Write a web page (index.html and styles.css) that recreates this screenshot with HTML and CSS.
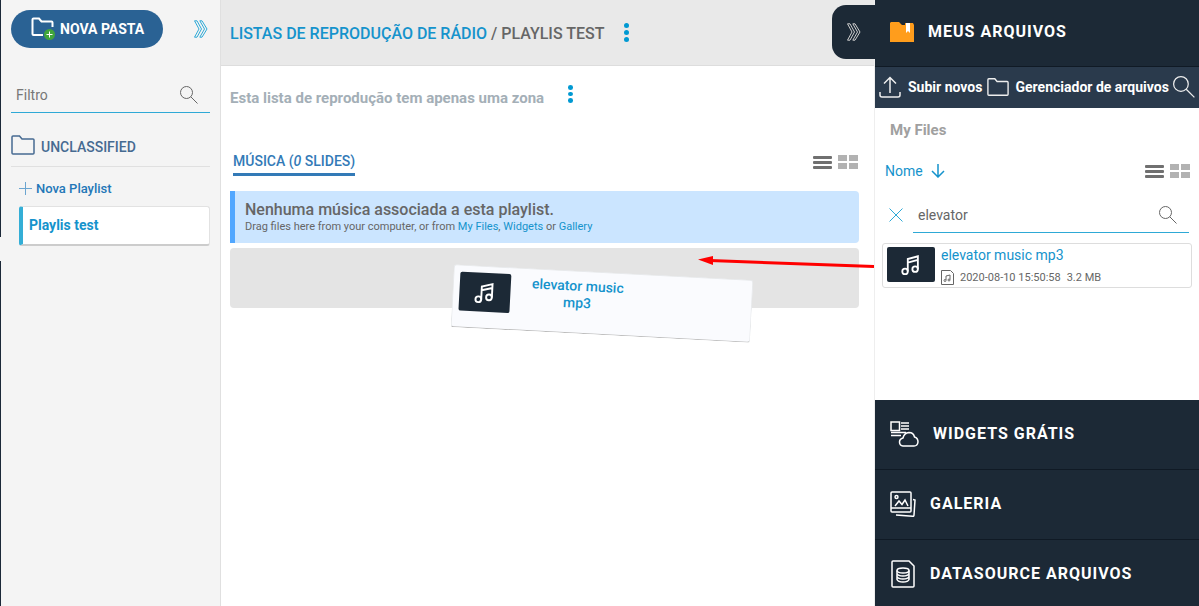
FILE: index.html
```html
<!DOCTYPE html>
<html lang="pt">
<head>
	<meta charset="utf-8">
	<title>Playlis test</title>
	<meta name="viewport" content="width=device-width, initial-scale=1">
	<link rel="stylesheet" href="styles.css">
</head>
<body>
	<svg class="defs" aria-hidden="true">
		<symbol id="search" viewBox="0 0 18 18">
			<circle cx="6.5" cy="6.5" r="6"/>
			<path d="M10.8 10.8L17.5 17.5"/>
		</symbol>
		<symbol id="folder" viewBox="0 0 24 20">
			<path d="M1 18V2Q1 1 2 1H8.5L11 4H22Q23 4 23 5V18Q23 19 22 19H2Q1 19 1 18Z"/>
		</symbol>
		<symbol id="chevrons" viewBox="0 0 14 18">
			<path d="M.5.8H3L7.5 9 3 17.2H.5L5 9ZM5.8.8H8L13 9 8 17.2H5.8L10.5 9Z"/>
		</symbol>
		<symbol id="note" viewBox="0 0 24 24">
			<circle cx="5.5" cy="19" r="3"/>
			<circle cx="16.5" cy="16.5" r="3"/>
			<path d="M8.5 19V5.5L19.5 2.5V16.5M8.5 9.5L19.5 6.5"/>
		</symbol>
	</svg>
	<div class="app">
		<div class="rail"><span></span></div>
		<aside class="sidebar">
			<div class="sidebar-top">
				<button class="new-folder" type="button">
					<svg width="25" height="24" viewBox="0 0 25 24">
						<path class="line" d="M12 18H2.5Q1.5 18 1.5 17V2.5Q1.5 1.5 2.5 1.5H8L10.500 4.500H20.500Q21.500 4.500 21.500 5.500V10"/>
						<circle cx="18.500" cy="17.500" r="5.500" fill="#41a63b"/>
						<path d="M18.500 14.500V20.500M15.500 17.500H21.500" stroke="#fff" stroke-width="1"/>
					</svg>
					NOVA PASTA
				</button>
				<button class="plain" type="button" aria-label="Recolher">
					<svg class="icon blue" width="14" height="18"><use href="#chevrons"/></svg>
				</button>
			</div>
			<div class="filter">
				<input type="text" placeholder="Filtro" aria-label="Filtro">
				<svg class="icon gray" width="18" height="18"><use href="#search"/></svg>
			</div>
			<a class="folder" href="#">
				<svg class="icon bold" width="24" height="20"><use href="#folder"/></svg>
				<span>UNCLASSIFIED</span>
			</a>
			<div class="playlists">
				<a class="new-playlist" href="#">
					<svg class="icon" width="13" height="13" viewBox="0 0 13 13"><path d="M6.5 0V13M0 6.5H13"/></svg>
					Nova Playlist
				</a>
				<a class="playlist" href="#">Playlis test</a>
			</div>
		</aside>
		<main class="main">
			<header class="main-header">
				<h1><a href="#">LISTAS DE REPRODUÇÃO DE RÁDIO</a> / PLAYLIS TEST</h1>
				<button class="plain dots" type="button" aria-label="Menu"><i></i><i></i><i></i></button>
				<button class="panel-toggle" type="button" aria-label="Fechar painel">
					<svg class="icon" width="14" height="18"><use href="#chevrons"/></svg>
				</button>
			</header>
			<div class="content">
				<div class="zone">
					<p>Esta lista de reprodução tem apenas uma zona</p>
					<button class="plain dots" type="button" aria-label="Menu da zona"><i></i><i></i><i></i></button>
				</div>
				<div class="tabs">
					<a class="tab" href="#">MÚSICA (<em>0</em> SLIDES)</a>
					<div class="views">
						<button class="plain view-list" type="button" aria-label="Lista"><i></i><i></i><i></i></button>
						<button class="plain view-grid" type="button" aria-label="Grade"><i></i><i></i><i></i><i></i></button>
					</div>
				</div>
				<div class="notice">
					<h2>Nenhuma música associada a esta playlist.</h2>
					<p>Drag files here from your computer, or from <a href="#">My Files</a>, <a href="#">Widgets</a> or <a href="#">Gallery</a></p>
				</div>
				<div class="drop">
					<div class="dragged">
						<div class="thumb"><svg class="icon" width="23" height="24"><use href="#note"/></svg></div>
						<span>elevator music mp3</span>
					</div>
					<svg class="arrow" width="176" height="14" viewBox="0 0 176 14">
						<path d="M12 4.500L176 10.500" stroke="#f00" stroke-width="3"/>
						<path d="M0 3.500L15 0V9Z" fill="#f00"/>
					</svg>
				</div>
			</div>
		</main>
		<aside class="panel">
			<button class="section open" type="button">
				<svg width="24" height="20" viewBox="0 0 24 20">
					<path d="M1 0H9L12 3H15V1H23L24 3V20H0V1Z" fill="#ff9d1c"/>
					<path d="M16 1H20V11L18 9 16 11Z" fill="#fff"/>
				</svg>
				MEUS ARQUIVOS
			</button>
			<div class="toolbar">
				<button class="plain" type="button">
					<svg class="icon bold" width="22" height="22" viewBox="0 0 22 22"><path d="M11 17V1.500M5 7.500L11 1.500 17 7.500M1 16V19Q1 21 3 21H19Q21 21 21 19V16"/></svg>
					Subir novos
				</button>
				<button class="plain" type="button">
					<svg class="icon bold" width="22" height="20"><use href="#folder"/></svg>
					Gerenciador de arquivos
				</button>
				<button class="plain" type="button" aria-label="Buscar">
					<svg class="icon" width="22" height="22"><use href="#search"/></svg>
				</button>
			</div>
			<div class="files">
				<h3>My Files</h3>
				<div class="sort">
					<a href="#">Nome
						<svg class="icon bold" width="14" height="14" viewBox="0 0 14 14"><path d="M7 0V13M1 7L7 13 13 7"/></svg>
					</a>
					<div class="views">
						<button class="plain view-list" type="button" aria-label="Lista"><i></i><i></i><i></i></button>
						<button class="plain view-grid" type="button" aria-label="Grade"><i></i><i></i><i></i><i></i></button>
					</div>
				</div>
				<div class="search">
					<button class="plain" type="button" aria-label="Limpar">
						<svg class="icon blue" width="14" height="14" viewBox="0 0 14 14"><path d="M.5.5L13.500 13.500M13.500.5L.5 13.500"/></svg>
					</button>
					<div class="filter">
						<input type="text" value="elevator" aria-label="Buscar arquivos">
						<svg class="icon gray" width="18" height="18"><use href="#search"/></svg>
					</div>
				</div>
				<div class="file">
					<div class="thumb"><svg class="icon" width="22" height="24"><use href="#note"/></svg></div>
					<div class="file-info">
						<a href="#">elevator music mp3</a>
						<p>
							<svg class="icon gray" width="13" height="15" viewBox="0 0 13 15">
								<path d="M.5.5H9.500L12.500 3.500V14.500H.5Z"/>
								<path d="M5 10V6L9 5V9.500"/>
								<circle cx="4" cy="10.500" r="1"/>
								<circle cx="8" cy="10" r="1"/>
							</svg>
							<span>2020-08-10 15:50:58</span>
							<span>3.2 MB</span>
						</p>
					</div>
				</div>
			</div>
			<button class="section" type="button">
				<svg class="icon bold" width="29" height="26" viewBox="0 0 29 26">
					<path d="M1 1H9.500V9.500H1ZM11 2H19M11 5H19M11 8H19M1 11.500H16M1 14.500H11"/>
					<path d="M13 25Q9.500 24.500 9.500 21 9.500 18 13 17 14 12 19 11.500 23.500 11.500 24.500 16 28 17 28 21 27.500 25 24 25Z"/>
				</svg>
				WIDGETS GRÁTIS
			</button>
			<button class="section" type="button">
				<svg class="icon bold" width="26" height="26" viewBox="0 0 26 26">
					<path d="M2 1H20Q21 1 21 2V20Q21 21 20 21H2Q1 21 1 20V2Q1 1 2 1ZM1 17H21"/>
					<path d="M5 15L9 10 12 13.500 15 9 18 15"/>
					<circle cx="6.500" cy="6" r="1.500"/>
					<path d="M23 8.500L25 9 24 24Q24 25.500 22.500 25.200L6 24"/>
				</svg>
				GALERIA
			</button>
			<button class="section" type="button">
				<svg class="icon bold" width="26" height="28" viewBox="0 0 26 28">
					<path d="M3 1H19L24 6V26Q24 27 23 27H3Q2 27 2 26V2Q2 1 3 1Z"/>
					<ellipse cx="13" cy="10.500" rx="6" ry="2.500"/>
					<path d="M7 10.500V19.500Q8 22 13 22 18 22 19 19.500V10.500M7 13.500Q8 16 13 16 18 16 19 13.500M7 16.500Q8 19 13 19 18 19 19 16.500"/>
				</svg>
				DATASOURCE ARQUIVOS
			</button>
		</aside>
	</div>
</body>
</html>
```
FILE: styles.css
```css
* {
	margin: 0;
	padding: 0;
	box-sizing: border-box;
}
body {
	font-family: Roboto, sans-serif;
	font-size: 14px;
	color: #666;
	background: #fff;
}
a {
	color: #1593cc;
	text-decoration: none;
}
button,
input {
	font: inherit;
	color: inherit;
}
button {
	cursor: pointer;
}
svg {
	flex: none;
}
.defs {
	position: absolute;
	width: 0;
	height: 0;
}
.icon {
	fill: none;
	stroke: currentColor;
	stroke-width: 1;
}
.icon.bold {
	stroke-width: 1.5;
}
.blue {
	color: #2ea9d6;
}
.gray {
	color: #666;
}
.plain {
	display: flex;
	align-items: center;
	background: none;
	border: none;
}
.app {
	display: flex;
	height: 100vh;
	overflow: hidden;
}

/* left */
.rail {
	width: 1px;
	padding-top: 237px;
	background: #1b2838;
}
.rail span {
	display: block;
	height: 24px;
	background: #f4f4f4;
}
.sidebar {
	width: 220px;
	padding: 10px;
	background: #f4f4f4;
	border-right: 1px solid #e0e0e0;
}
.sidebar-top {
	display: flex;
	align-items: center;
	justify-content: space-between;
	padding-right: 2px;
}
.new-folder {
	display: flex;
	align-items: center;
	gap: 4px;
	height: 38px;
	padding: 0 19px 0 20px;
	border: none;
	border-radius: 19px;
	background: #2a6294;
	color: #fff;
	font-weight: 700;
}
.new-folder .line {
	fill: none;
	stroke: #fff;
	stroke-width: 2;
}
.filter {
	display: flex;
	align-items: center;
	height: 36px;
	padding: 0 12px 0 5px;
	border-bottom: 1px solid #2ea9d6;
}
.filter input {
	flex: 1;
	min-width: 0;
	border: none;
	outline: none;
	background: none;
}
.filter input::placeholder {
	color: #777;
}
.sidebar .filter {
	margin-top: 29px;
}
.folder {
	display: flex;
	align-items: center;
	gap: 6px;
	height: 54px;
	padding-top: 10px;
	border-bottom: 1px solid #e0e0e0;
	color: #466a91;
	font-weight: 500;
}
.folder span {
	padding-top: 4px;
}
.playlists {
	padding: 9px 0 0 8px;
}
.new-playlist {
	display: flex;
	align-items: center;
	gap: 4px;
	height: 24px;
	margin-bottom: 6px;
	color: #2377b8;
	font-size: 13px;
	font-weight: 500;
}
.new-playlist .icon {
	color: #6ba5d0;
}
.playlist {
	display: block;
	padding: 0 6px;
	line-height: 37px;
	border: 1px solid #e2e2e2;
	border-left: 4px solid #34aed6;
	border-bottom: 2px solid #ccc;
	border-radius: 3px;
	background: #fff;
	font-weight: 700;
}

/* middle */
.main {
	flex: 1;
	min-width: 0;
}
.main-header {
	position: relative;
	display: flex;
	align-items: center;
	gap: 20px;
	height: 66px;
	padding-left: 9px;
	background: #e9e9e9;
	border-bottom: 1px solid #ddd;
}
.main-header h1 {
	padding-top: 2px;
	font-size: 16px;
	font-weight: 500;
}
.dots {
	flex-direction: column;
	gap: 2px;
}
.dots i {
	width: 5px;
	height: 5px;
	border-radius: 50%;
	background: #0099d2;
}
.panel-toggle {
	position: absolute;
	top: 5px;
	right: -1px;
	display: flex;
	align-items: center;
	width: 43px;
	height: 54px;
	padding-left: 15px;
	border: none;
	border-radius: 14px 0 0 14px;
	background: #1c2936;
	color: #ccc;
}
.content {
	padding: 19px 15px 0 9px;
}
.zone {
	display: flex;
	gap: 24px;
	color: #a4afb7;
	font-size: 15px;
	font-weight: 700;
	line-height: 26px;
}
.zone .dots {
	height: 18px;
}
.tabs {
	display: flex;
	align-items: center;
	justify-content: space-between;
	height: 26px;
	margin: 38px 0 16px;
	padding: 0 1px 0 3px;
}
.tab {
	line-height: 24px;
	border-bottom: 3px solid #337ab7;
	color: #337ab7;
	font-size: 14px;
	font-weight: 500;
}
.views {
	display: flex;
	gap: 6px;
}
.view-list {
	flex-direction: column;
	justify-content: center;
	gap: 2px;
}
.view-list i {
	width: 19px;
	height: 3px;
	border-radius: 1px;
	background: #707070;
}
.view-grid {
	display: grid;
	grid-template-columns: 9px 9px;
	gap: 2px;
}
.view-grid i {
	height: 6px;
	background: #b2b2b2;
}
.notice {
	padding: 9px 10px;
	border-left: 5px solid #51a7ff;
	border-radius: 0 4px 4px 0;
	background: #cbe5ff;
}
.notice h2 {
	font-size: 16px;
	font-weight: 500;
	line-height: 20px;
}
.notice p {
	font-size: 11px;
	line-height: 14px;
}
.drop {
	position: relative;
	height: 60px;
	margin-top: 5px;
	border-radius: 4px;
	background: #e4e4e4;
}
.dragged {
	position: absolute;
	top: 24px;
	left: 222px;
	display: flex;
	gap: 12px;
	width: 300px;
	height: 63px;
	padding: 6px;
	border: 1px solid #e8eaec;
	border-bottom-color: #bbb;
	border-radius: 3px;
	background: #fafbfe;
	color: #1593cc;
	font-weight: 500;
	line-height: 17px;
	text-align: center;
	transform: rotate(3deg);
}
.dragged span {
	width: 110px;
}
.thumb {
	display: flex;
	flex: none;
	align-items: center;
	justify-content: center;
	width: 48px;
	height: 35px;
	border-radius: 2px;
	background: #1c2936;
	color: #fff;
}
.thumb .icon {
	stroke-width: 2;
}
.dragged .thumb {
	width: 51px;
	height: 39px;
}
.arrow {
	position: absolute;
	top: 8px;
	right: -15px;
}

/* right */
.panel {
	display: flex;
	flex-direction: column;
	width: 325px;
	border-left: 1px solid #eee;
}
.section {
	display: flex;
	flex: none;
	align-items: center;
	gap: 14px;
	height: 70px;
	padding: 0 15px 2px;
	border: none;
	border-bottom: 1px solid #101a25;
	background: #1c2936;
	color: #fff;
	font-size: 16px;
	font-weight: 700;
	letter-spacing: 1px;
}
.section.open {
	height: 67px;
	padding-bottom: 3px;
}
.toolbar {
	display: flex;
	flex: none;
	align-items: center;
	justify-content: space-between;
	height: 41px;
	padding: 0 4px 2px;
	background: #2a3a4c;
	color: #fff;
	font-weight: 700;
}
.toolbar .plain {
	gap: 7px;
}
.toolbar .icon {
	color: #eee;
}
.files {
	flex: 1 0 auto;
	min-height: 292px;
	padding: 12px 7px 0;
	background: #fff;
}
.files h3 {
	padding-left: 8px;
	color: #a0a0a0;
	font-size: 15px;
	font-weight: 700;
	line-height: 20px;
}
.sort {
	display: flex;
	align-items: center;
	justify-content: space-between;
	height: 40px;
	margin-top: 11px;
	padding: 0 2px 0 3px;
}
.sort a {
	display: flex;
	align-items: center;
	gap: 8px;
}
.search {
	display: flex;
	gap: 10px;
	margin: 6px 3px 0 7px;
}
.search .filter {
	flex: 1;
}
.file {
	display: flex;
	gap: 6px;
	height: 45px;
	margin-top: 10px;
	padding: 3px 4px;
	border: 1px solid #ddd;
	border-radius: 3px;
}
.file-info a {
	display: block;
	line-height: 17px;
}
.file-info p {
	display: flex;
	align-items: center;
	gap: 6px;
	margin-top: 5px;
	font-size: 11px;
	line-height: 17px;
}
```
